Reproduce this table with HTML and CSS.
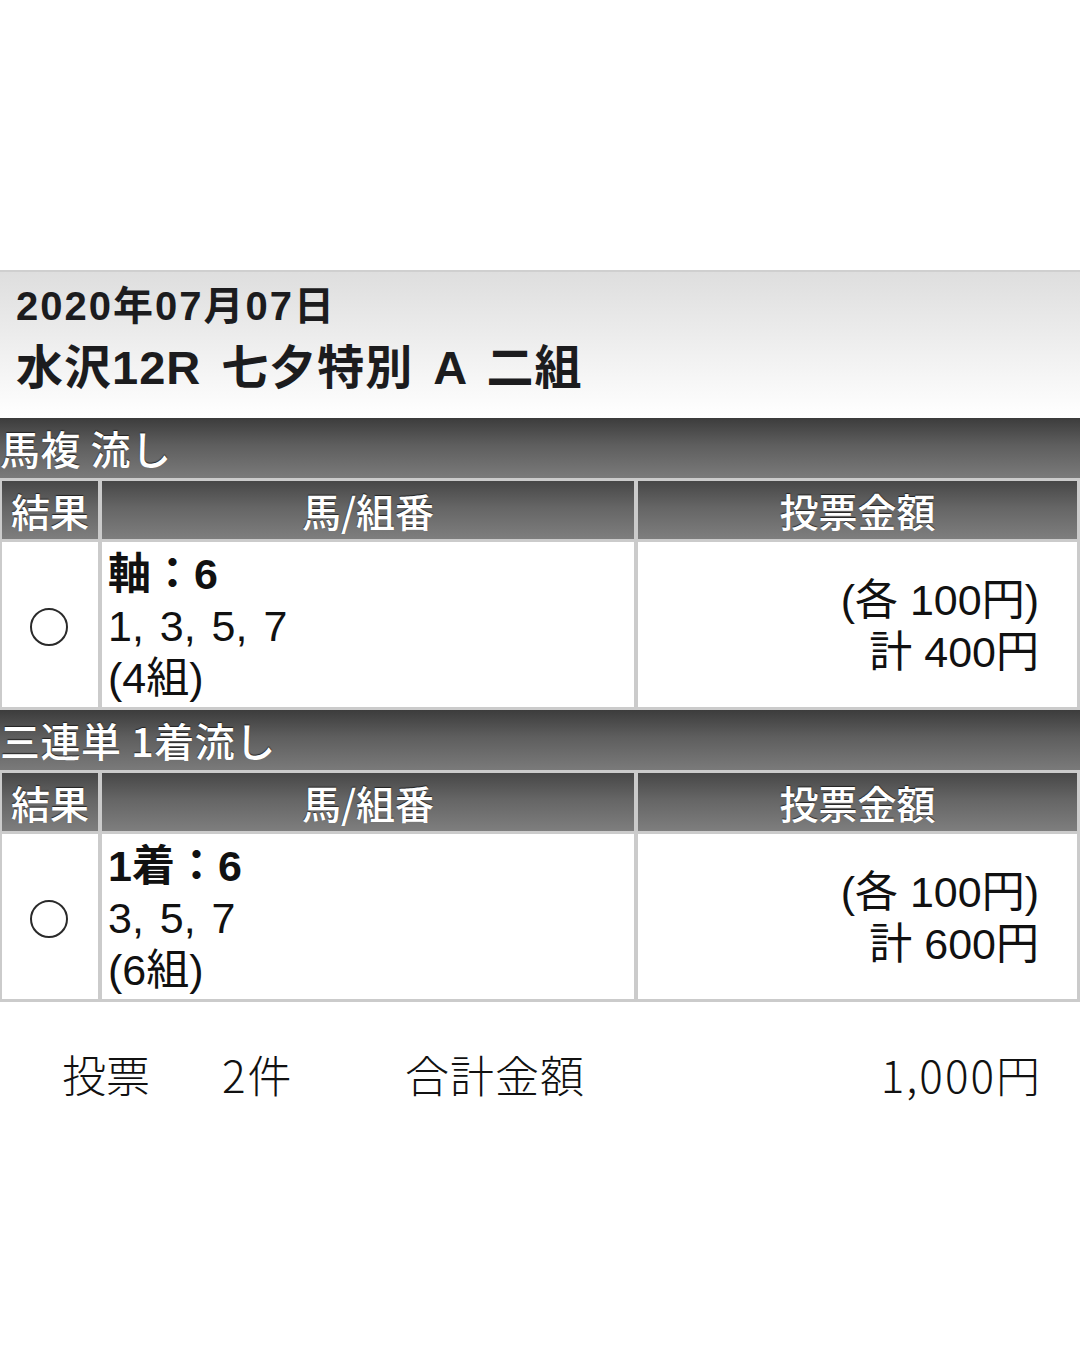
FILE: index.html
```html
<!DOCTYPE html>
<html lang="ja">
<head>
<meta charset="utf-8">
<link rel="stylesheet" href="styles.css">
</head>
<body>
<div class="page">
  <div class="ticket-head">
    <div class="date">2020年07月07日</div>
    <div class="race">水沢12R 七夕特別 A 二組</div>
  </div>
  <div class="bets">
    <div class="bet-type">馬複 流し</div>
    <div class="col-head">結果</div>
    <div class="col-head">馬/組番</div>
    <div class="col-head">投票金額</div>
    <div class="cell result"><span class="mark"></span></div>
    <div class="cell horses">
      <div class="axis">軸：6</div>
      <div>1, 3, 5, 7</div>
      <div>(4組)</div>
    </div>
    <div class="cell amount">
      <div>(各 100円)</div>
      <div>計 400円</div>
    </div>

    <div class="bet-type">三連単 1着流し</div>
    <div class="col-head">結果</div>
    <div class="col-head">馬/組番</div>
    <div class="col-head">投票金額</div>
    <div class="cell result"><span class="mark"></span></div>
    <div class="cell horses">
      <div class="axis">1着：6</div>
      <div>3, 5, 7</div>
      <div>(6組)</div>
    </div>
    <div class="cell amount">
      <div>(各 100円)</div>
      <div>計 600円</div>
    </div>
  </div>
  <div class="summary">
    <span class="s-label">投票</span>
    <span class="s-count">2件</span>
    <span class="s-total">合計金額</span>
    <span class="s-amount">1,000円</span>
  </div>
</div>
</body>
</html>
```

FILE: styles.css
```css
html, body {
  margin: 0;
  padding: 0;
  background: #ffffff;
}
body {
  font-family: "Liberation Sans", "Noto Sans CJK JP", sans-serif;
  color: #111;
  width: 1080px;
  height: 1350px;
  overflow: hidden;
}
.page {
  padding-top: 270px;
}
.ticket-head {
  height: 148px;
  box-sizing: border-box;
  border-top: 2px solid #cfcfcf;
  background: linear-gradient(to bottom, #dedede 0%, #f0f0f0 55%, #ffffff 100%);
  padding: 10px 0 0 16px;
}
.date {
  font-size: 40px;
  font-weight: 700;
  line-height: 48px;
  letter-spacing: 2px;
  color: #1c1c1e;
}
.race {
  font-size: 47px;
  font-weight: 700;
  line-height: 76px;
  color: #1c1c1e;
  letter-spacing: 1px;
  word-spacing: 6px;
}
.bets {
  display: grid;
  grid-template-columns: 96px 532px 1fr;
  gap: 3px 4px;
  background: #cbcbcb;
  padding: 0 3px 3px 2px;
}
.bet-type {
  grid-column: 1 / -1;
  height: 60px;
  background: linear-gradient(to bottom, #3c3c3c 0%, #5e5e5e 45%, #7a7a7a 100%);
  color: #fff;
  font-size: 40px;
  line-height: 60px;
  font-family: "Noto Sans CJK JP", sans-serif;
  font-weight: 500;
  letter-spacing: 0.5px;
  text-shadow: 0 -1px 1px #222;
  margin-left: -2px;
  margin-right: -3px;
  overflow: hidden;
}
.col-head {
  height: 58px;
  background: linear-gradient(to bottom, #474747 0%, #656565 45%, #7e7e7e 100%);
  color: #fff;
  font-family: "Noto Sans CJK JP", sans-serif;
  font-size: 39px;
  font-weight: 500;
  line-height: 58px;
  text-align: center;
  text-shadow: 0 -1px 1px #222;
  overflow: hidden;
}
.cell {
  background: #fff;
  height: 165px;
  box-sizing: border-box;
}
.result {
  display: flex;
  align-items: center;
  justify-content: center;
}
.mark {
  width: 38px;
  height: 38px;
  border: 2px solid #2a2a2a;
  border-radius: 50%;
  box-sizing: border-box;
  margin-left: -2px;
  margin-top: 4px;
}
.horses {
  padding: 6px 0 0 6px;
  font-size: 43px;
  line-height: 52px;
  color: #111;
  word-spacing: 4px;
}
.axis {
  font-weight: 700;
}
.amount {
  padding: 32px 38px 0 0;
  font-size: 43px;
  line-height: 52px;
  text-align: right;
  color: #111;
}
.summary {
  display: flex;
  align-items: baseline;
  padding: 42px 38px 0 62px;
  font-family: "Noto Sans CJK JP", sans-serif;
  font-size: 44px;
  font-weight: 300;
  line-height: 60px;
  color: #111;
}
.s-label {
  width: 160px;
}
.s-count {
  width: 183px;
  letter-spacing: 2px;
}
.s-total {
  flex: 1;
  letter-spacing: 1px;
}
.s-amount {
  text-align: right;
  letter-spacing: 2px;
}
```
